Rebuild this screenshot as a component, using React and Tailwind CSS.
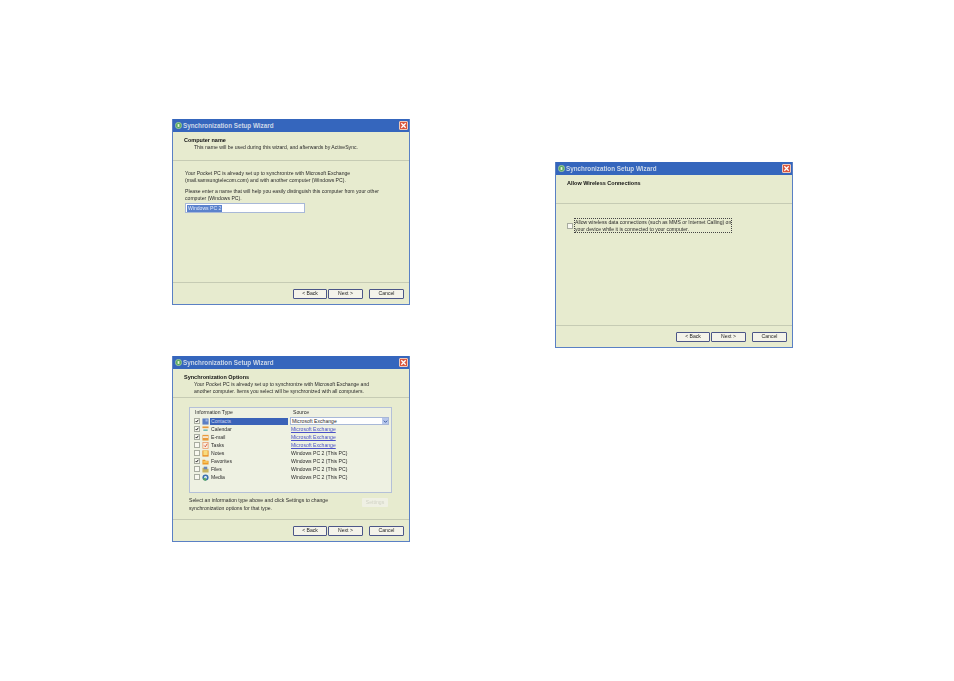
const rows = [
  { name: "Contacts", src: "Microsoft Exchange", on: true, sel: true, icon: "contacts" },
  { name: "Calendar", src: "Microsoft Exchange", on: true, link: true, icon: "calendar" },
  { name: "E-mail", src: "Microsoft Exchange", on: true, link: true, icon: "mail" },
  { name: "Tasks", src: "Microsoft Exchange", on: false, link: true, icon: "tasks" },
  { name: "Notes", src: "Windows PC 2 (This PC)", on: false, icon: "notes" },
  { name: "Favorites", src: "Windows PC 2 (This PC)", on: true, icon: "favorites" },
  { name: "Files", src: "Windows PC 2 (This PC)", on: false, icon: "files" },
  { name: "Media", src: "Windows PC 2 (This PC)", on: false, icon: "media" },
];

const RowIcon = ({ type }) => (
  <svg viewBox="0 0 8 8" className="ml-[2px] w-[7px] h-[7px] shrink-0">
    {type === "contacts" && (
      <>
        <rect x="0.5" y="0.5" width="7" height="7" fill="#5b7fc4" />
        <rect x="4" y="1.5" width="2.5" height="2.5" fill="#9db6e4" />
      </>
    )}
    {type === "calendar" && (
      <>
        <rect x="0.5" y="0.5" width="7" height="7" fill="#f6f3e4" />
        <rect x="0.5" y="0.5" width="7" height="2" fill="#e89a3c" />
        <rect x="1.5" y="4" width="5" height="1.5" fill="#58b0a8" />
      </>
    )}
    {type === "mail" && (
      <>
        <rect x="0.5" y="1" width="7" height="6.5" fill="#e89a3c" />
        <rect x="1" y="2.5" width="6" height="2" fill="#f8ecd8" />
      </>
    )}
    {type === "tasks" && (
      <>
        <rect x="1" y="0.5" width="6" height="7" fill="#f8efe0" stroke="#e8905c" strokeWidth="0.8" />
        <path d="M2.5 4 L3.8 5.5 L6 2" fill="none" stroke="#d84c30" strokeWidth="1" />
      </>
    )}
    {type === "notes" && (
      <>
        <rect x="0.5" y="0.5" width="7" height="7" fill="#e88a1c" />
        <rect x="1.5" y="0.5" width="5" height="5.5" fill="#f8dc80" />
      </>
    )}
    {type === "favorites" && (
      <>
        <path d="M0.5 2 H3.5 L4.2 3 H7.5 V7.5 H0.5 Z" fill="#ee9c28" />
        <rect x="1.5" y="3.8" width="5" height="1.5" fill="#f8d878" />
      </>
    )}
    {type === "files" && (
      <>
        <path d="M0.5 2 H3.5 L4.2 3 H7.5 V7.5 H0.5 Z" fill="#c8b460" />
        <rect x="2" y="0.8" width="4" height="3" fill="#6a88b8" />
      </>
    )}
    {type === "media" && (
      <>
        <circle cx="4" cy="4" r="3.5" fill="#3a70b0" />
        <circle cx="4" cy="4" r="1.6" fill="#e8f0f8" />
        <path d="M0.8 5.5 A3.5 3.5 0 0 0 5 7.4 L4 4 Z" fill="#58a860" />
      </>
    )}
  </svg>
);

const Check = ({ on, className = "" }) => (
  <div className={`w-[6px] h-[6px] shrink-0 bg-[#f8f8f0] border-[0.5px] border-[#a8aca0] flex items-center justify-center ${className}`}>
    {on && (
      <svg viewBox="0 0 6 6" className="w-[6px] h-[6px]">
        <path d="M1 3 L2.4 4.6 L5 1.2" fill="none" stroke="#111" strokeWidth="1.4" />
      </svg>
    )}
  </div>
);

const WizardButton = ({ children, width }) => (
  <div className={`h-[10px] rounded-[1px] bg-[#f4f3ea] flex items-center justify-center text-[5.1px] text-[#222] border-[0.75px] border-[#4c5688] ${width}`}>
    {children}
  </div>
);

const Wizard = ({ head, body, bodyClass = "pt-[9px] pl-[12px]" }) => (
  <div className="w-[238px] h-[186px] flex flex-col bg-[#e7ebcf] border-x border-b border-[#5a80c4]">
    {/* title bar */}
    <div className="h-[13px] shrink-0 bg-[#3566bd] flex items-center pl-[2px] pr-[1px]">
      <svg viewBox="0 0 8 8" className="w-[7px] h-[7px] shrink-0">
        <circle cx="4" cy="4" r="3.6" fill="#58a860" stroke="#d8e8c0" strokeWidth="0.6" />
        <path d="M3 2.4 H5 V5.6 H3 Z" fill="#e8f4d8" />
      </svg>
      <span className="ml-[1px] text-[6.3px] font-bold text-[#ccd8e8] whitespace-nowrap">
        Synchronization Setup Wizard
      </span>
      <div className="ml-auto w-[9px] h-[9px] bg-[#d9553c] rounded-[1px] flex items-center justify-center border-[0.5px] border-[#f0c8b8]">
        <svg viewBox="0 0 8 8" className="w-[7px] h-[7px]">
          <path d="M1.5 1.5 L6.5 6.5 M6.5 1.5 L1.5 6.5" stroke="#fff" strokeWidth="1.5" />
        </svg>
      </div>
    </div>
    {/* header */}
    <div className="h-[29px] shrink-0 pl-[11px] pt-[5px] border-b border-[#c6cbb4] text-[#333] leading-[7px]">
      {head}
    </div>
    <div className={`flex-1 min-h-0 text-[5.1px] text-[#2a2a2a] leading-[6.5px] ${bodyClass}`}>{body}</div>
    {/* buttons */}
    <div className="h-[22px] shrink-0 border-t border-[#c6cbb4] flex items-center justify-end pr-[5px]">
      <WizardButton width="w-[34px]">&lt; Back</WizardButton>
      <div className="w-[1px]" />
      <WizardButton width="w-[35px]">Next &gt;</WizardButton>
      <div className="w-[6px]" />
      <WizardButton width="w-[35px]">Cancel</WizardButton>
    </div>
  </div>
);

const Title = ({ children }) => <div className="text-[5.5px] font-bold text-[#111]">{children}</div>;
const Sub = ({ children }) => <div className="text-[5.1px] text-[#2a2a2a] pl-[10px] whitespace-nowrap">{children}</div>;

const ComputerName = () => (
  <Wizard
    head={
      <>
        <Title>Computer name</Title>
        <Sub>This name will be used during this wizard, and afterwards by ActiveSync.</Sub>
      </>
    }
    body={
      <>
        <p className="whitespace-nowrap">Your Pocket PC is already set up to synchronize with Microsoft Exchange</p>
        <p className="whitespace-nowrap">(mail.samsungtelecom.com) and with another computer (Windows PC).</p>
        <p className="whitespace-nowrap mt-[5px]">Please enter a name that will help you easily distinguish this computer from your other</p>
        <p className="whitespace-nowrap">computer (Windows PC).</p>
        <div className="mt-[2px] w-[120px] h-[10px] bg-white border-[0.5px] border-[#a8b8d8] flex items-center pl-[1px]">
          <span className="bg-[#5b82cc] text-[#dfe8f8] px-[1px] leading-[7px]">Windows PC 2</span>
        </div>
      </>
    }
  />
);

const SyncOptions = () => (
  <Wizard
    head={
      <>
        <Title>Synchronization Options</Title>
        <Sub>Your Pocket PC is already set up to synchronize with Microsoft Exchange and</Sub>
        <Sub>another computer. Items you select will be synchronized with all computers.</Sub>
      </>
    }
    bodyClass="pt-[9px] pl-[16px]"
    body={
      <>
        <div className="w-[203px] h-[86px] bg-[#eef1e2] border-[0.5px] border-[#b4c0d8]">
          <div className="h-[8px] flex items-center text-[5.1px] text-[#2a2a2a]">
            <span className="w-[103px] pl-[5px]">Information Type</span>
            <span>Source</span>
          </div>
          <div className="flex flex-col mt-[1px]">
            {rows.map((r) => (
              <div key={r.name} className="h-[8px] flex items-center">
                <Check on={r.on} className="ml-[4px]" />
                <RowIcon type={r.icon} />
                <div className={`ml-[1px] w-[78px] h-[7px] pl-[1px] flex items-center ${r.sel ? "bg-[#3a62b8] text-[#c8d6f0]" : ""}`}>
                  {r.name}
                </div>
                {r.sel ? (
                  <div className="ml-[2px] w-[99px] h-[8px] bg-white border-[0.5px] border-[#a8b8d8] flex items-center justify-between pl-[1px]">
                    Microsoft Exchange
                    <div className="w-[6px] h-[6px] bg-[#b8c8ec] flex items-center justify-center">
                      <svg viewBox="0 0 6 6" className="w-[5px] h-[5px]">
                        <path d="M1 2 L3 4 L5 2" fill="none" stroke="#3a5aa0" strokeWidth="1.2" />
                      </svg>
                    </div>
                  </div>
                ) : (
                  <div className={`ml-[3px] ${r.link ? "text-[#4a50c8] underline" : ""}`}>{r.src}</div>
                )}
              </div>
            ))}
          </div>
        </div>
        <div className="flex mt-[3px] items-start">
          <div className="w-[170px] pt-[1px]">
            <p className="whitespace-nowrap">Select an information type above and click Settings to change</p>
            <p className="whitespace-nowrap mt-[1px]">synchronization options for that type.</p>
          </div>
          <div className="ml-[3px] mt-[2px] w-[26px] h-[9px] bg-[#eff0e4] rounded-[1px] flex items-center justify-center text-[5.1px] text-[#d0d2c4]">
            Settings
          </div>
        </div>
      </>
    }
  />
);

const WirelessConnections = () => (
  <Wizard
    head={<Title>Allow Wireless Connections</Title>}
    bodyClass="pt-[14px] pl-[11px]"
    body={
      <div className="flex items-center">
        <Check on={false} />
        <div className="ml-[1px] border-[0.5px] border-dotted border-[#444]">
          <p className="whitespace-nowrap">Allow wireless data connections (such as MMS or Internet Calling) on</p>
          <p className="whitespace-nowrap">your device while it is connected to your computer.</p>
        </div>
      </div>
    }
  />
);

export default function App() {
  return (
    <div className="w-[954px] h-[681px] bg-white flex overflow-hidden font-['Liberation_Sans',sans-serif]">
      <div className="ml-[172px] pt-[119px] flex flex-col gap-[51px] blur-[0.35px]">
        <ComputerName />
        <SyncOptions />
      </div>
      <div className="ml-[145px] pt-[162px] blur-[0.35px]">
        <WirelessConnections />
      </div>
    </div>
  );
}
